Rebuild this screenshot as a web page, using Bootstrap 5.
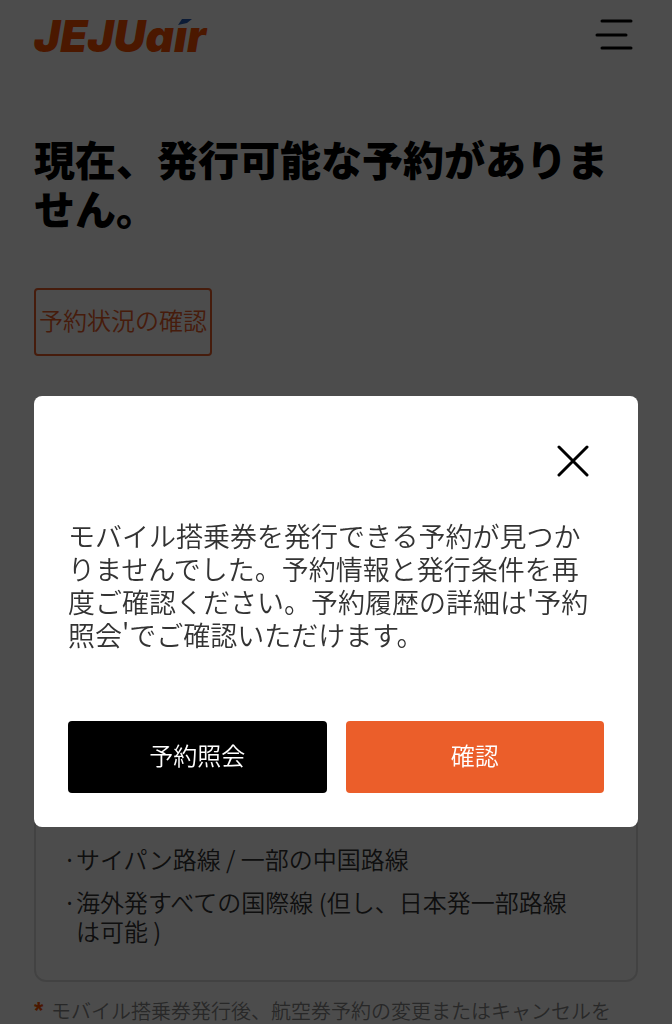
<!DOCTYPE html>
<html lang="ja">
<head>
<meta charset="utf-8">
<meta name="viewport" content="width=device-width, initial-scale=1">
<title>JEJUair モバイル搭乗券</title>
<link href="https://cdn.jsdelivr.net/npm/bootstrap@5.3.0/dist/css/bootstrap.min.css" rel="stylesheet">
<style>
  :root { --jeju: #eb5e2a; }
  body { font-family: "Noto Sans CJK JP", sans-serif; font-weight: 350; color: #333; }
  .page-pad { padding-left: 34px; padding-right: 34px; }
  .site-header { height: 72px; }
  .brand { font: italic 900 44px/48px Inter, "Liberation Sans", sans-serif; color: #fa5000; }
  .brand-flag { top: 10px; left: 4px; }
  .menu-btn { width: 43px; height: 36px; }
  .page-title { font-size: 41px; line-height: 49px; font-weight: 900; color: #000; margin-top: 62px; }
  .btn-check-status { --bs-btn-color: var(--jeju); --bs-btn-border-color: var(--jeju); --bs-btn-border-width: 2px;
    --bs-btn-border-radius: 4px; --bs-btn-padding-x: 3px; --bs-btn-padding-y: 0; font-size: 24px; line-height: 60px; padding-bottom: 4px; font-weight: 350; margin-top: 56px; }
  .notice-card { min-height: 562px; margin-top: 64px; padding: 30px 27px; border: 2px solid #dedede; border-radius: 12px; }
  .route-list { font-size: 24px; line-height: 29px; gap: 14px; padding-right: 36px; margin-bottom: 5px; }
  .route-list li::before { content: "·"; width: 13px; flex: none; }
  .foot-note { font-size: 20px; line-height: 30px; color: #888; margin-top: 14px; }
  .foot-note .star { width: 17px; color: #fa5000; font-family: "Liberation Sans", sans-serif; font-size: 24px; font-weight: 700; }
  .modal-backdrop { --bs-backdrop-opacity: .7; }
  .notice-modal .modal-dialog { max-width: none; margin: 396px 34px 34px; }
  .notice-modal .modal-content { border: 0; border-radius: 8px; padding: 44px 34px 34px; }
  .close-btn { width: 42px; height: 42px; margin-right: 10px; }
  .modal-message { font-size: 27px; line-height: 33px; margin-top: 37px; margin-bottom: 70px; }
  .modal-actions { gap: 19px; }
  .modal-actions .btn { font-size: 24px; line-height: 66px; padding: 0 0 4px; border-radius: 4px; font-weight: 350; color: #fff; }
  .btn-lookup { background: #000; }
  .btn-confirm { background: var(--jeju); }
</style>
</head>
<body class="modal-open overflow-hidden">

<header class="site-header page-pad d-flex justify-content-between align-items-center">
  <a class="brand text-decoration-none" href="#" aria-label="JEJUair">JEJUa<span class="position-relative">ı<svg class="brand-flag position-absolute" width="14" height="8" viewBox="0 0 14 8" aria-hidden="true"><path d="M4 0h10L9 4 0 6z" fill="#2860b8"/></svg></span>r</a>
  <button type="button" class="menu-btn btn p-0 border-0 d-flex" aria-label="メニュー">
    <svg width="43" height="36" viewBox="0 0 43 36" fill="none" stroke="#000" stroke-width="3" stroke-linecap="round" aria-hidden="true"><path d="M7 3h29M2 17h29M7 30h29"/></svg>
  </button>
</header>

<main class="page-pad">
  <h1 class="page-title mb-0">現在、発行可能な予約がありません。</h1>
  <button type="button" class="btn btn-check-status">予約状況の確認</button>

  <section class="notice-card d-flex flex-column justify-content-end">
    <ul class="route-list list-unstyled d-flex flex-column">
      <li class="d-flex"><span>サイパン路線 / 一部の中国路線</span></li>
      <li class="d-flex"><span>海外発すべての国際線 (但し、日本発一部路線は可能 )</span></li>
    </ul>
  </section>
  <p class="foot-note d-flex"><span class="star flex-shrink-0">*</span><span>モバイル搭乗券発行後、航空券予約の変更またはキャンセルを</span></p>
</main>

<div class="modal-backdrop show"></div>
<div class="modal notice-modal d-block" tabindex="-1" role="dialog" aria-modal="true" aria-describedby="modalMessage">
  <div class="modal-dialog">
    <div class="modal-content">
      <button type="button" class="close-btn btn p-0 border-0 align-self-end d-flex align-items-center justify-content-center" aria-label="閉じる">
        <svg width="32" height="32" viewBox="0 0 32 32" stroke="#000" stroke-width="3" stroke-linecap="round" aria-hidden="true"><path d="M2 2l28 28M30 2L2 30"/></svg>
      </button>
      <p id="modalMessage" class="modal-message">モバイル搭乗券を発行できる予約が見つかりませんでした。予約情報と発行条件を再度ご確認ください。予約履歴の詳細は'予約照会'でご確認いただけます。</p>
      <div class="modal-actions d-flex">
        <button type="button" class="btn btn-lookup flex-fill w-50">予約照会</button>
        <button type="button" class="btn btn-confirm flex-fill w-50">確認</button>
      </div>
    </div>
  </div>
</div>

<script src="https://cdn.jsdelivr.net/npm/bootstrap@5.3.0/dist/js/bootstrap.bundle.min.js"></script>
</body>
</html>
